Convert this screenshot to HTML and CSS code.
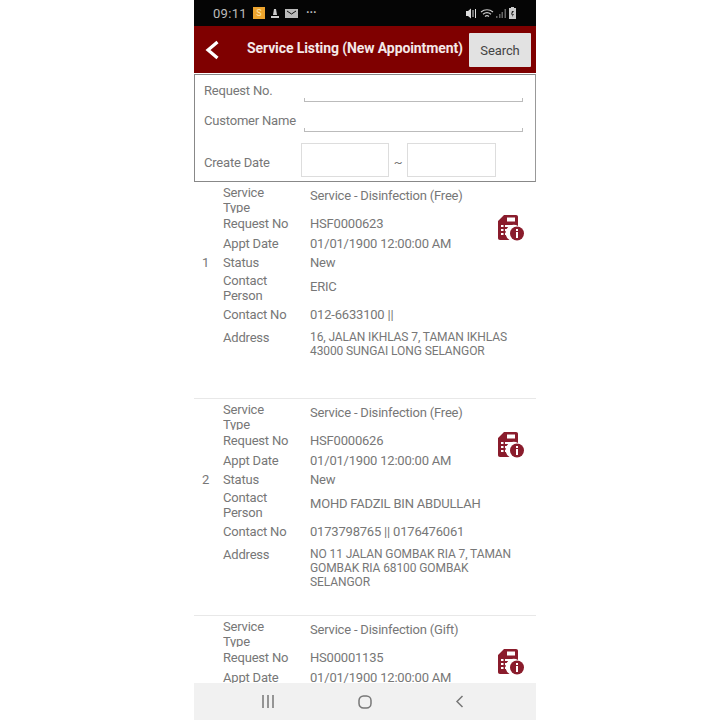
FILE: index.html
```html
<!DOCTYPE html>
<html lang="en">
<head>
 <meta charset="UTF-8">
 <title>Service Listing</title>
 <link rel="stylesheet" href="styles.css">
</head>
<body>
 <svg class="sprite" width="0" height="0">
  <symbol id="info-doc" viewBox="0 0 27 27">
   <path fill="#8a1c2c" d="M7 1h12c1.300 0 2 .8 2 2v9a8 8 0 0 0-8.500 14H3c-1.300 0-2-.8-2-2V7z"/>
   <path fill="#fff" d="M10 3.500h8v4h-8zM4 11h2.500v2H4zM8 11h9v2H8zM4 15h2.500v2H4zM8 15h5v2H8zM4 19h2.500v2H4zM8 19h3.500v2H8z"/>
   <circle cx="20" cy="19.500" r="7" fill="#8a1c2c"/>
   <path fill="#fff" d="M19 15h2v2h-2zM19 18h2v6h-2z"/>
  </symbol>
 </svg>
 <div class="phone">
  <div class="status-bar">
   <span class="clock">09:11</span>
   <span class="app-badge">S</span>
   <svg class="st-icon" width="8" height="11" viewBox="0 0 8 11"><path fill="#ccc" d="M3 1h2l1 6H2zM0 8h8v2H0z"/></svg>
   <svg class="st-icon" width="13" height="11" viewBox="0 0 13 11"><path fill="#bbb" d="M0 1h13v9H0z"/><path fill="none" stroke="#111" d="M2 3l4.500 3L11 3"/></svg>
   <span class="more">···</span>
   <span class="st-right">
    <svg width="11" height="11" viewBox="0 0 11 11"><path fill="#ddd" d="M0 3h2l3-2.500v10L2 8H0z"/><path stroke="#ddd" fill="none" d="M7 2v7M9.500 1v9"/></svg>
    <svg width="14" height="11" viewBox="0 0 14 11"><path fill="none" stroke="#ccc" stroke-width="1.200" d="M1 4c3.500-3 8.500-3 12 0M3 6.300c2.500-2 5.500-2 8 0M5 8.500c1.300-1 2.700-1 4 0"/></svg>
    <svg width="10" height="11" viewBox="0 0 10 11"><path fill="#666" d="M0 8h1.500v2H0zM3 6h1.500v4H3zM5.500 4H7v6H5.500zM8.500 1H10v9H8.500z"/></svg>
    <svg width="9" height="12" viewBox="0 0 9 12"><path fill="#ccc" d="M3 0h3v1h2v11H1V1h2z"/><path fill="#222" d="M4 4l2 0-2 3h2l-2 3 .5-2.500H3z"/></svg>
   </span>
  </div>

  <div class="header">
   <svg class="back" width="15" height="20" viewBox="0 0 15 20"><path fill="none" stroke="#fff" stroke-width="3.200" d="M12.500 2L3 10l9.500 8"/></svg>
   <div class="title">Service Listing (New Appointment)</div>
   <button class="search-btn">Search</button>
  </div>

  <div class="filter">
   <div class="filter-row">
    <label>Request No.</label>
    <div class="line-input"></div>
   </div>
   <div class="filter-row">
    <label>Customer Name</label>
    <div class="line-input"></div>
   </div>
   <div class="filter-row date-row">
    <label>Create Date</label>
    <div class="date-box"></div>
    <span class="tilde">~</span>
    <div class="date-box date-box-2"></div>
   </div>
  </div>

  <div class="list">
   <div class="item">
    <div class="num">1</div>
    <div class="fields">
     <div class="f f-type"><span class="k">Service Type</span><span class="v">Service - Disinfection (Free)</span></div>
     <div class="f f-req"><span class="k">Request No</span><span class="v">HSF0000623</span></div>
     <div class="f f-req"><span class="k">Appt Date</span><span class="v">01/01/1900 12:00:00 AM</span></div>
     <div class="f f-status"><span class="k">Status</span><span class="v">New</span></div>
     <div class="f f-person"><span class="k">Contact Person</span><span class="v">ERIC</span></div>
     <div class="f f-req"><span class="k">Contact No</span><span class="v">012-6633100 ||</span></div>
     <div class="f f-addr"><span class="k">Address</span><span class="v">16, JALAN IKHLAS 7, TAMAN IKHLAS 43000 SUNGAI LONG SELANGOR</span></div>
    </div>
    <svg class="doc" width="27" height="27"><use href="#info-doc"/></svg>
   </div>
   <div class="item">
    <div class="num">2</div>
    <div class="fields">
     <div class="f f-type"><span class="k">Service Type</span><span class="v">Service - Disinfection (Free)</span></div>
     <div class="f f-req"><span class="k">Request No</span><span class="v">HSF0000626</span></div>
     <div class="f f-req"><span class="k">Appt Date</span><span class="v">01/01/1900 12:00:00 AM</span></div>
     <div class="f f-status"><span class="k">Status</span><span class="v">New</span></div>
     <div class="f f-person"><span class="k">Contact Person</span><span class="v">MOHD FADZIL BIN ABDULLAH</span></div>
     <div class="f f-req"><span class="k">Contact No</span><span class="v">0173798765 || 0176476061</span></div>
     <div class="f f-addr"><span class="k">Address</span><span class="v">NO 11 JALAN GOMBAK RIA 7, TAMAN GOMBAK RIA 68100 GOMBAK SELANGOR</span></div>
    </div>
    <svg class="doc" width="27" height="27"><use href="#info-doc"/></svg>
   </div>
   <div class="item">
    <div class="num">3</div>
    <div class="fields">
     <div class="f f-type"><span class="k">Service Type</span><span class="v">Service - Disinfection (Gift)</span></div>
     <div class="f f-req"><span class="k">Request No</span><span class="v">HS00001135</span></div>
     <div class="f f-req"><span class="k">Appt Date</span><span class="v">01/01/1900 12:00:00 AM</span></div>
    </div>
    <svg class="doc" width="27" height="27"><use href="#info-doc"/></svg>
   </div>
  </div>

  <div class="nav-bar">
   <svg width="14" height="13" viewBox="0 0 14 13"><path stroke="#777" stroke-width="1.500" d="M2 0v13M7 0v13M12 0v13"/></svg>
   <svg width="14" height="14" viewBox="0 0 14 14"><rect x="1" y="1" width="12" height="12" rx="4.500" fill="none" stroke="#777" stroke-width="1.500"/></svg>
   <svg width="9" height="13" viewBox="0 0 9 13"><path fill="none" stroke="#777" stroke-width="1.500" d="M7.500 1L2 6.500 7.500 12"/></svg>
  </div>
 </div>
</body>
</html>
```

FILE: styles.css
```css
body {
 margin: 0;
 background: #fff;
 font-family: Roboto, "Liberation Sans", sans-serif;
}
.sprite {
 position: absolute;
}
.phone {
 width: 342px;
 height: 720px;
 margin-left: 194px;
 display: flex;
 flex-direction: column;
 overflow: hidden;
 color: #777;
}
.status-bar {
 height: 26px;
 flex: none;
 background: #050505;
 display: flex;
 align-items: center;
 padding: 0 19px 0 19px;
 gap: 6px;
}
.clock {
 color: #bbb;
 font-size: 13px;
 letter-spacing: .3px;
 margin-right: 0;
}
.app-badge {
 width: 12px;
 height: 12px;
 background: #eda42e;
 color: #ffe3a8;
 font-size: 9px;
 line-height: 12px;
 text-align: center;
}
.more {
 color: #bbb;
 font-size: 12px;
 font-weight: bold;
 margin-left: 2px;
}
.st-right {
 margin-left: auto;
 display: flex;
 align-items: center;
 gap: 2px;
}
.st-right svg:first-child {
 margin-right: 1px;
}
.header {
 height: 47px;
 flex: none;
 background: #7f0000;
 display: flex;
 align-items: center;
}
.back {
 margin-left: 11px;
 flex: none;
}
.title {
 margin-left: 27px;
 margin-top: -3px;
 color: #f4e8e8;
 font-size: 14px;
 font-weight: bold;
 letter-spacing: -.1px;
 white-space: nowrap;
 flex: 1;
}
.search-btn {
 width: 62px;
 height: 34px;
 margin-right: 5px;
 padding: 2px 0 0;
 background: #e2e2e2;
 border: 0;
 border-radius: 1px;
 color: #444;
 font: 13px Roboto, sans-serif;
 letter-spacing: -.1px;
}
.filter {
 margin-top: 1px;
 height: 106px;
 flex: none;
 border: 1px solid #888;
 border-right-color: #999;
 background: #fff;
 padding-left: 9px;
}
.filter-row {
 display: flex;
 font-size: 13px;
 letter-spacing: -.2px;
}
.filter-row label {
 width: 100px;
 flex: none;
 line-height: 16px;
}
.filter-row:nth-child(1),
.filter-row:nth-child(2) {
 padding-top: 8px;
 height: 22px;
}
.line-input {
 width: 219px;
 height: 18px;
 border-bottom: 1px solid #bbb;
 background: linear-gradient(#bbb, #bbb) left bottom / 1px 3px no-repeat,
  linear-gradient(#bbb, #bbb) right bottom / 1px 3px no-repeat;
}
.date-row {
 margin-top: 8px;
 align-items: center;
}
.date-row label {
 width: 97px;
 padding-top: 6px;
}
.date-box {
 width: 86px;
 height: 32px;
 border: 1px solid #ddd;
}
.date-box-2 {
 width: 87px;
}
.tilde {
 width: 18px;
 text-align: center;
 padding-top: 5px;
}
.list {
 flex: 1;
 overflow: hidden;
 min-height: 0;
}
.item {
 height: 217px;
 box-sizing: border-box;
 border-bottom: 1px solid #e8e8e8;
 display: flex;
 align-items: flex-start;
 font-size: 13px;
 letter-spacing: -.2px;
 line-height: 15px;
}
.num {
 width: 29px;
 flex: none;
 padding: 73px 0 0 8px;
 box-sizing: border-box;
}
.fields {
 width: 273px;
 flex: none;
 padding-top: 3px;
}
.f {
 display: flex;
 align-items: center;
}
.k {
 width: 87px;
 flex: none;
 padding-right: 20px;
 box-sizing: border-box;
}
.v {
 flex: 1;
}
.f-type {
 height: 28px;
 align-items: flex-start;
 overflow: hidden;
}
.f-type .k {
 padding-right: 30px;
}
.f-type .v {
 padding-top: 3px;
}
.f-req {
 height: 20px;
}
.f-status {
 height: 18px;
}
.f-person {
 height: 33px;
}
.f-person .k {
 padding-right: 30px;
}
.f-person .v {
 padding-bottom: 3px;
}
.f-addr {
 margin-top: 6px;
 align-items: flex-start;
}
.f-addr .v {
 font-size: 12px;
 letter-spacing: -.1px;
 line-height: 14px;
 margin-right: -30px;
}
.doc {
 flex: none;
 margin-top: 32px;
 margin-left: 1px;
}
.nav-bar {
 height: 37px;
 flex: none;
 background: #f1f1f1;
 display: flex;
 align-items: center;
 justify-content: space-between;
 padding: 0 72px 0 67px;
}
```
